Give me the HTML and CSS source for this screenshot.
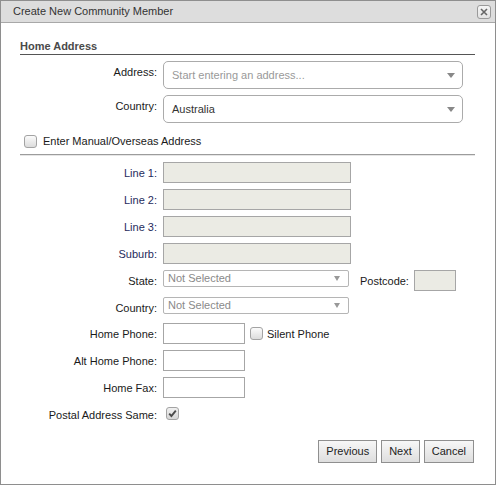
FILE: index.html
```html
<!DOCTYPE html>
<html>
<head>
<meta charset="utf-8">
<title>Create New Community Member</title>
<link rel="stylesheet" href="styles.css">
</head>
<body>
<div class="dialog">
  <div class="titlebar">
    <span class="title">Create New Community Member</span>
    <span class="close"><svg width="8" height="8" viewBox="0 0 8 8"><path d="M1 1L7 7M7 1L1 7" stroke="#666" stroke-width="1.6" fill="none"/></svg></span>
  </div>
  <div class="content">
    <div class="heading">Home Address</div>
    <div class="row">
      <span class="lbl">Address:</span>
      <div class="combo placeholder"><span>Start entering an address...</span><span class="arrow"></span></div>
    </div>
    <div class="row">
      <span class="lbl">Country:</span>
      <div class="combo"><span>Australia</span><span class="arrow"></span></div>
    </div>
    <div class="check-row">
      <span class="cb"></span>
      <span>Enter Manual/Overseas Address</span>
    </div>
    <div class="sep"></div>

    <div class="row">
      <span class="lbl req">Line 1:</span>
      <span class="input ro wide"></span>
    </div>
    <div class="row">
      <span class="lbl req">Line 2:</span>
      <span class="input ro wide"></span>
    </div>
    <div class="row">
      <span class="lbl req">Line 3:</span>
      <span class="input ro wide"></span>
    </div>
    <div class="row">
      <span class="lbl req">Suburb:</span>
      <span class="input ro wide"></span>
    </div>
    <div class="row">
      <span class="lbl">State:</span>
      <div class="select"><span>Not Selected</span><span class="sarrow"></span></div>
      <span class="lbl-inline">Postcode:</span>
      <span class="input ro post"></span>
    </div>
    <div class="row">
      <span class="lbl">Country:</span>
      <div class="select"><span>Not Selected</span><span class="sarrow"></span></div>
    </div>
    <div class="row">
      <span class="lbl">Home Phone:</span>
      <span class="input phone"></span>
      <span class="cb cb-inline"></span>
      <span class="cb-label">Silent Phone</span>
    </div>
    <div class="row">
      <span class="lbl">Alt Home Phone:</span>
      <span class="input phone"></span>
    </div>
    <div class="row">
      <span class="lbl">Home Fax:</span>
      <span class="input phone"></span>
    </div>
    <div class="row">
      <span class="lbl">Postal Address Same:</span>
      <span class="cb checked"><svg width="9" height="9" viewBox="0 0 9 9"><path d="M1.2 4.6L3.4 7L7.8 1.6" stroke="#4a4a4a" stroke-width="1.9" fill="none"/></svg></span>
    </div>

    <div class="actions">
      <span class="btn">Previous</span>
      <span class="btn">Next</span>
      <span class="btn">Cancel</span>
    </div>
  </div>
</div>
</body>
</html>
```

FILE: styles.css
```css
body {
  margin: 0;
  font-family: "Liberation Sans", Arial, sans-serif;
  font-size: 11px;
  color: #222;
  background: #fff;
}

.dialog {
  width: 496px;
  height: 485px;
  box-sizing: border-box;
  border: 1px solid #8e8e8e;
  background: #fff;
}

.titlebar {
  height: 21px;
  border-bottom: 1px solid #a8a8a8;
  background: #dddddd;
  display: flex;
  align-items: center;
  justify-content: space-between;
  padding: 0 4px 0 12px;
  line-height: 21px;
  color: #333;
}

.close {
  width: 14px;
  height: 14px;
  box-sizing: border-box;
  border: 1px solid #9a9a9a;
  border-radius: 3px;
  background: linear-gradient(#f5f5f5, #e2e2e2);
  display: flex;
  align-items: center;
  justify-content: center;
}

.close svg { display: block; }

.content {
  padding: 17px 20px 0 19px;
}

.heading {
  font-weight: bold;
  color: #4a4a4a;
  line-height: 13px;
  padding-bottom: 1px;
  border-bottom: 1px solid #555;
  margin-bottom: 6px;
}

.row {
  display: flex;
  align-items: flex-start;
  min-height: 20px;
  margin-bottom: 6px;
}

.lbl {
  flex: none;
  width: 137px;
  margin-right: 6px;
  text-align: right;
  line-height: 13px;
  padding-top: 5px;
  color: #1a1a1a;
}

.lbl.req { color: #1f2b5c; }

.combo {
  width: 300px;
  height: 28px;
  box-sizing: border-box;
  border: 1px solid #ababab;
  border-radius: 5px;
  display: flex;
  align-items: center;
  justify-content: space-between;
  padding: 0 7px 0 8px;
  color: #333;
}

.combo.placeholder { color: #999; }

.arrow {
  width: 0;
  height: 0;
  border-left: 4px solid transparent;
  border-right: 4px solid transparent;
  border-top: 5px solid #888;
  margin-top: 1px;
}

.check-row {
  display: flex;
  align-items: center;
  line-height: 13px;
  margin: 12px 0 6px 4px;
  color: #1a1a1a;
}

.cb {
  flex: none;
  width: 13px;
  height: 13px;
  box-sizing: border-box;
  border: 1px solid #a3a3a3;
  border-radius: 3px;
  background: linear-gradient(#fbfbfb, #dcdcdc);
  margin-right: 6px;
  display: flex;
  align-items: center;
  justify-content: center;
}

.cb.checked {
  margin: 3px 0 0 3px;
  background: linear-gradient(#f0f0f0, #d6d6d6);
}

.cb-inline {
  margin: 4px 4px 0 5px;
}

.cb-label {
  line-height: 13px;
  padding-top: 5px;
  color: #1a1a1a;
}

.sep {
  height: 0;
  border-top: 1px solid #9c9c9c;
  border-bottom: 1px solid #e6e6e6;
  margin-bottom: 6px;
}

.input {
  flex: none;
  height: 21px;
  box-sizing: border-box;
  border: 1px solid #a6a6a6;
  background: #fff;
}

.input.ro { background: #ebebe4; }
.input.wide { width: 188px; }
.input.post { width: 42px; }
.input.phone { width: 82px; }

.select {
  flex: none;
  width: 186px;
  height: 17px;
  box-sizing: border-box;
  border: 1px solid #b5b5b5;
  border-radius: 2px;
  display: flex;
  align-items: center;
  justify-content: space-between;
  padding: 0 8px 0 4px;
  color: #8a8a8a;
  line-height: 15px;
}

.sarrow {
  width: 0;
  height: 0;
  border-left: 3px solid transparent;
  border-right: 3px solid transparent;
  border-top: 5px solid #999;
}

.lbl-inline {
  margin: 0 5px 0 11px;
  line-height: 13px;
  padding-top: 5px;
  color: #1a1a1a;
}

.actions {
  display: flex;
  justify-content: flex-end;
  gap: 4px;
  margin-top: 16px;
  padding-right: 1px;
}

.btn {
  height: 23px;
  box-sizing: border-box;
  padding: 0 7px;
  border: 1px solid #8f8f8f;
  background: linear-gradient(#f7f7f7, #dedede);
  line-height: 21px;
  color: #222;
  font-size: 11px;
}
```
